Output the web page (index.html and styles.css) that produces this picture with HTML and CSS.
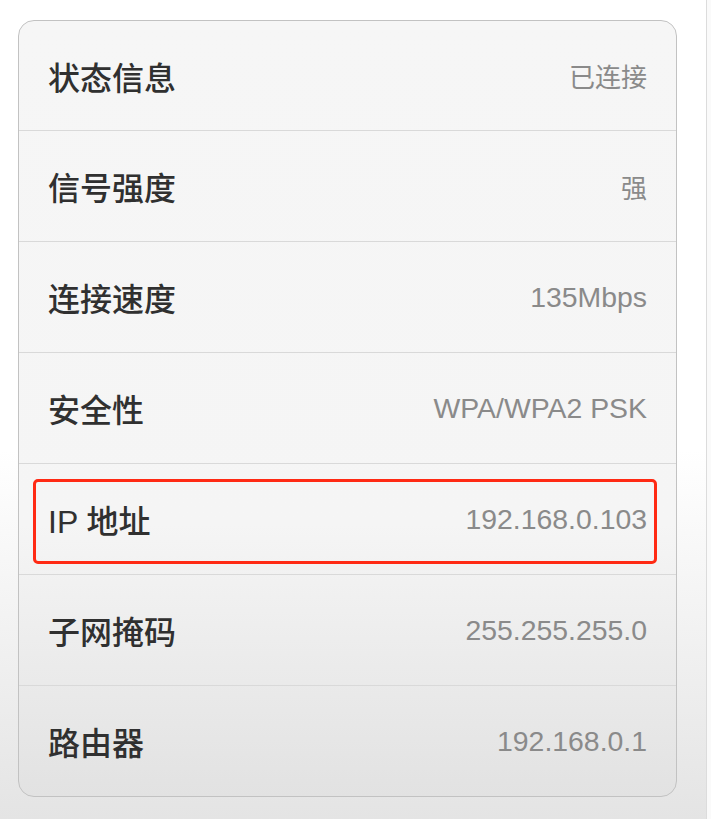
FILE: index.html
```html
<!DOCTYPE html>
<html lang="zh-CN">
<head>
<meta charset="utf-8">
<title>WLAN 状态</title>
<link rel="stylesheet" href="styles.css">
</head>
<body>
<div class="screen">
  <div class="card">
    <div class="row"><span class="label">状态信息</span><span class="value cjk">已连接</span></div>
    <div class="row"><span class="label">信号强度</span><span class="value cjk">强</span></div>
    <div class="row"><span class="label">连接速度</span><span class="value">135Mbps</span></div>
    <div class="row"><span class="label">安全性</span><span class="value">WPA/WPA2 PSK</span></div>
    <div class="row highlighted"><span class="label">IP 地址</span><span class="value">192.168.0.103</span><span class="mark"></span></div>
    <div class="row"><span class="label">子网掩码</span><span class="value">255.255.255.0</span></div>
    <div class="row"><span class="label">路由器</span><span class="value">192.168.0.1</span></div>
  </div>
</div>
<div class="edge"></div>
</body>
</html>
```
FILE: styles.css
```css
html, body {
  margin: 0;
  padding: 0;
  height: 100%;
}
body {
  display: flex;
  height: 819px;
  overflow: hidden;
  background: linear-gradient(#ffffff 0%, #ffffff 55%, #e4e4e4 100%);
  font-family: "Noto Sans CJK SC", "Liberation Sans", sans-serif;
}
.screen {
  flex: 0 0 706px;
  padding: 20px 0 0 18px;
  box-sizing: border-box;
}
.edge {
  flex: 1;
  border-left: 1px solid #dcdcdc;
  background: #fafafa;
}
.card {
  width: 659px;
  box-sizing: border-box;
  border: 1px solid #c2c2c2;
  border-radius: 16px;
  overflow: hidden;
  background: linear-gradient(#f6f6f6 0%, #f5f5f5 65%, #e2e2e2 100%);
}
.row {
  position: relative;
  display: flex;
  align-items: center;
  justify-content: space-between;
  height: 110px;
  padding: 0 29px;
  border-top: 1px solid #d9d9d9;
}
.row:first-child {
  height: 109px;
  border-top: none;
}
.label {
  font-family: "Liberation Sans", "Noto Sans CJK SC", sans-serif;
  font-size: 32px;
  font-weight: 500;
  color: #303030;
}
.value {
  font-family: "Liberation Sans", "Noto Sans CJK SC", sans-serif;
  font-size: 28.4px;
  color: #8a8a8a;
}
.value.cjk {
  font-family: "Noto Sans CJK SC", sans-serif;
  font-size: 26px;
}
.mark {
  position: absolute;
  left: 14px;
  right: 19px;
  top: 15px;
  bottom: 10px;
  border: 3px solid #ff2a14;
  border-radius: 5px;
}
```
